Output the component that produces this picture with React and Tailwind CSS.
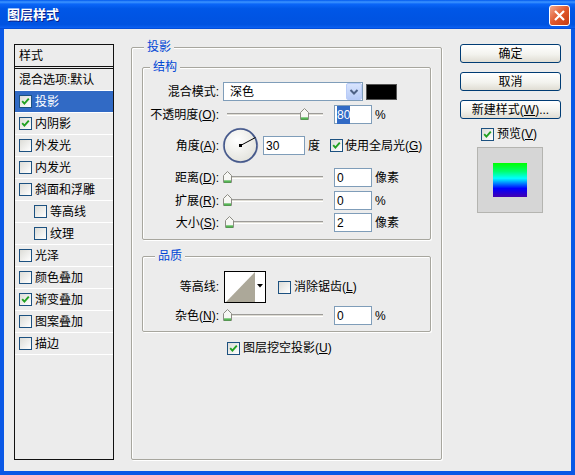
import React from "react";

/* =========================
   SMALL PARTS
========================= */

function Check({ on }) {
  return (
    <span className="w-[13px] h-[13px] shrink-0 border border-[#1c5180] bg-[linear-gradient(135deg,#dcdcd7,#ffffff)] flex items-center justify-center">
      {on && (
        <svg width="9" height="9" viewBox="0 0 9 9">
          <path d="M1.2 4.2 L3.4 6.6 L7.8 1.6" fill="none" stroke="#21a121" strokeWidth="1.9" />
        </svg>
      )}
    </span>
  );
}

function U({ c }) {
  return <span className="underline underline-offset-[1px]">{c}</span>;
}

function Group({ title, tx, className, children }) {
  return (
    <div className={"relative border border-[#a7a69e] rounded-[2px] shadow-[inset_1px_1px_0_#fff,1px_1px_0_#fff] " + className}>
      <span className={"absolute -top-[9px] px-[3px] bg-[#ececec] text-[#0046d5] leading-[16px] " + tx}>
        {title}
      </span>
      {children}
    </div>
  );
}

function Label({ children }) {
  return <div className="w-[76px] shrink-0 text-right whitespace-nowrap">{children}</div>;
}

function Field({ children, w }) {
  return (
    <div className={"h-[19px] shrink-0 border border-[#7f9db9] bg-white flex items-center pl-[2px] " + w}>
      {children}
    </div>
  );
}

function Slider({ pct }) {
  return (
    <div className="relative ml-[3px] w-[108px] h-[19px] shrink-0 flex items-center">
      <div className="ml-[5px] w-[96px] h-[3px] border-t border-[#9d9c99] bg-[#dedcd4] border-b border-b-white" />
      <svg
        className="absolute top-[3px]"
        style={{ left: 1 + pct * 96 }}
        width="9"
        height="12"
        viewBox="0 0 9 12"
      >
        <path d="M0.5 4.5 L4.5 0.5 L8.5 4.5 L8.5 11.5 L0.5 11.5 Z" fill="#f7f7f4" stroke="#8c8c84" />
        <path d="M1 10 H8 M1 11 H8" stroke="#21a121" />
      </svg>
    </div>
  );
}

function SliderRow({ label, pct, value, unit, sel, className }) {
  return (
    <div className={"flex items-center h-[19px] " + className}>
      <Label>{label}</Label>
      <Slider pct={pct} />
      <div className="ml-[4px]">
        <Field w="w-[38px]">
          {sel ? <span className="bg-[#316ac5] text-white">{value}</span> : value}
        </Field>
      </div>
      <span className="ml-[3px]">{unit}</span>
    </div>
  );
}

function XPButton({ children }) {
  return (
    <div className="w-[101px] h-[19px] rounded-[3px] border border-[#003c74] bg-[linear-gradient(#ffffff,#f3f3ee_55%,#e0ddd3)] flex items-center justify-center">
      {children}
    </div>
  );
}

const styles = [
  { t: "投影", on: true, sel: true },
  { t: "内阴影", on: true },
  { t: "外发光" },
  { t: "内发光" },
  { t: "斜面和浮雕" },
  { t: "等高线", sub: true },
  { t: "纹理", sub: true },
  { t: "光泽" },
  { t: "颜色叠加" },
  { t: "渐变叠加", on: true },
  { t: "图案叠加" },
  { t: "描边" },
];

/* =========================
   DIALOG
========================= */

export default function App() {
  return (
    <div className="w-[575px] h-[475px] bg-[#0a58e6] flex flex-col text-[12px] text-black font-['Liberation_Sans','Noto_Sans_CJK_SC',sans-serif]">
      {/* TITLE BAR */}
      <div className="h-[29px] shrink-0 flex items-center pl-[7px] pr-[5px] bg-[linear-gradient(to_bottom,#0058ee_0%,#3d95ff_7%,#0a66f8_14%,#0057e7_30%,#0054e3_60%,#0053e1_85%,#0a5ff0_95%,#0046d0_100%)]">
        <span className="text-white font-bold text-[13px] [text-shadow:1px_1px_0_#0a1f8a]">图层样式</span>
        <div className="ml-auto mt-[2px] w-[21px] h-[21px] rounded-[3px] border border-white bg-[linear-gradient(135deg,#f2a88e,#e0582c_50%,#c43c12)] flex items-center justify-center">
          <svg width="13" height="13" viewBox="0 0 13 13">
            <path d="M2 2 L11 11 M11 2 L2 11" stroke="#fff" strokeWidth="2.2" />
          </svg>
        </div>
      </div>

      {/* CLIENT */}
      <div className="flex-1 mx-[4px] mb-[4px] bg-[#ececec] flex items-start">
        {/* STYLE LIST */}
        <div className="ml-[10px] mt-[15px] w-[100px] h-[416px] border border-[#111] flex flex-col">
          <div className="h-[24px] shrink-0 pl-[4px] flex items-center border-b-[3px] border-double border-[#111]">样式</div>
          <div className="h-[22px] shrink-0 pl-[4px] flex items-center border-b border-white">混合选项:默认</div>
          {styles.map((s) => (
            <div
              key={s.t}
              className={
                "h-[22px] shrink-0 flex items-center gap-[2px] border-b border-white " +
                (s.sub ? "pl-[19px] " : "pl-[4px] ") +
                (s.sel ? "bg-[#316ac5] text-white" : "")
              }
            >
              <Check on={s.on} />
              <span className="ml-[1px]">{s.t}</span>
            </div>
          ))}
        </div>

        {/* MAIN GROUP */}
        <Group title="投影" tx="left-[12px]" className="ml-[17px] mt-[18px] w-[311px] h-[413px] pt-[19px] px-[10px]">
          {/* STRUCTURE */}
          <Group title="结构" tx="left-[7px]" className="pt-[14px] pb-[7px]">
            <div className="flex items-center h-[19px]">
              <Label>混合模式:</Label>
              <div className="ml-[4px] w-[140px] h-[19px] border border-[#7f9db9] bg-white flex items-center">
                <span className="flex-1 pl-[6px]">深色</span>
                <span className="w-[16px] h-[17px] rounded-[2px] border border-[#b9ccf8] bg-[linear-gradient(#d8e4fd,#b7cbf7)] flex items-center justify-center">
                  <svg width="10" height="8" viewBox="0 0 10 8">
                    <path d="M1.5 2 L5 5.5 L8.5 2" fill="none" stroke="#4d6185" strokeWidth="2" />
                  </svg>
                </span>
              </div>
              <div className="ml-[3px] w-[31px] h-[16px] bg-black border border-[#555]" />
            </div>

            <SliderRow
              className="mt-[4px]"
              label={<>不透明度(<U c="O" />):</>}
              pct={0.8}
              value="80"
              unit="%"
              sel
            />

            <div className="flex items-center h-[37px] mt-[3px]">
              <Label>角度(<U c="A" />):</Label>
              <svg className="ml-[3px] shrink-0" width="37" height="37" viewBox="0 0 37 37">
                <defs>
                  <radialGradient id="dial" cx="40%" cy="35%" r="70%">
                    <stop offset="0" stopColor="#ffffff" />
                    <stop offset="1" stopColor="#e1e1da" />
                  </radialGradient>
                </defs>
                <circle cx="18.5" cy="18.5" r="17.2" fill="url(#dial)" stroke="#9aa6c4" strokeWidth="1" />
                <circle cx="18.5" cy="18.5" r="16.4" fill="none" stroke="#45588a" strokeWidth="1.5" />
                <line x1="18.5" y1="18.5" x2="33.5" y2="10.5" stroke="#000" strokeWidth="1" />
                <rect x="17" y="17" width="3" height="3" fill="#000" />
              </svg>
              <div className="ml-[4px]">
                <Field w="w-[42px]">30</Field>
              </div>
              <span className="ml-[3px]">度</span>
              <span className="ml-[10px]">
                <Check on />
              </span>
              <span className="ml-[2px] whitespace-nowrap">使用全局光(<U c="G" />)</span>
            </div>

            <SliderRow className="mt-[4px]" label={<>距离(<U c="D" />):</>} pct={0} value="0" unit="像素" />
            <SliderRow className="mt-[4px]" label={<>扩展(<U c="R" />):</>} pct={0} value="0" unit="%" />
            <SliderRow className="mt-[3px]" label={<>大小(<U c="S" />):</>} pct={0.02} value="2" unit="像素" />
          </Group>

          {/* QUALITY */}
          <Group title="品质" tx="left-[12px]" className="mt-[16px] pt-[14px] pb-[6px]">
            <div className="flex items-center h-[32px]">
              <Label>等高线:</Label>
              <div className="ml-[5px] w-[42px] h-[32px] shrink-0 border border-black bg-white flex">
                <svg width="30" height="30" viewBox="0 0 30 30" className="shrink-0">
                  <polygon points="1,30 30,0 30,30" fill="#aca899" />
                </svg>
                <div className="flex-1 flex items-center justify-center pb-[2px]">
                  <svg width="6" height="4" viewBox="0 0 6 4">
                    <polygon points="0,0 6,0 3,3.5" fill="#000" />
                  </svg>
                </div>
              </div>
              <span className="ml-[12px]">
                <Check />
              </span>
              <span className="ml-[3px] whitespace-nowrap">消除锯齿(<U c="L" />)</span>
            </div>
            <SliderRow className="mt-[3px]" label={<>杂色(<U c="N" />):</>} pct={0} value="0" unit="%" />
          </Group>

          <div className="mt-[8px] h-[16px] flex items-center pl-[85px] gap-[3px]">
            <Check on />
            <span className="whitespace-nowrap">图层挖空投影(<U c="U" />)</span>
          </div>
        </Group>

        {/* BUTTONS */}
        <div className="ml-[18px] mt-[15px] w-[101px] flex flex-col">
          <XPButton>确定</XPButton>
          <div className="mt-[9px]">
            <XPButton>取消</XPButton>
          </div>
          <div className="mt-[9px]">
            <XPButton>
              新建样式(<U c="W" />)...
            </XPButton>
          </div>
          <div className="mt-[7px] h-[16px] flex items-center pl-[21px] gap-[3px]">
            <Check on />
            <span>预览(<U c="V" />)</span>
          </div>
          <div className="mt-[5px] ml-[17px] w-[66px] h-[66px] border border-[#b4b4b0] bg-[#d6d6d6] flex items-center justify-center">
            <div className="w-[34px] h-[34px] bg-[linear-gradient(#00ff00_0%,#00ff70_25%,#00ffff_45%,#0080ff_60%,#0000ff_75%,#4400b0_100%)]" />
          </div>
        </div>
      </div>
    </div>
  );
}
